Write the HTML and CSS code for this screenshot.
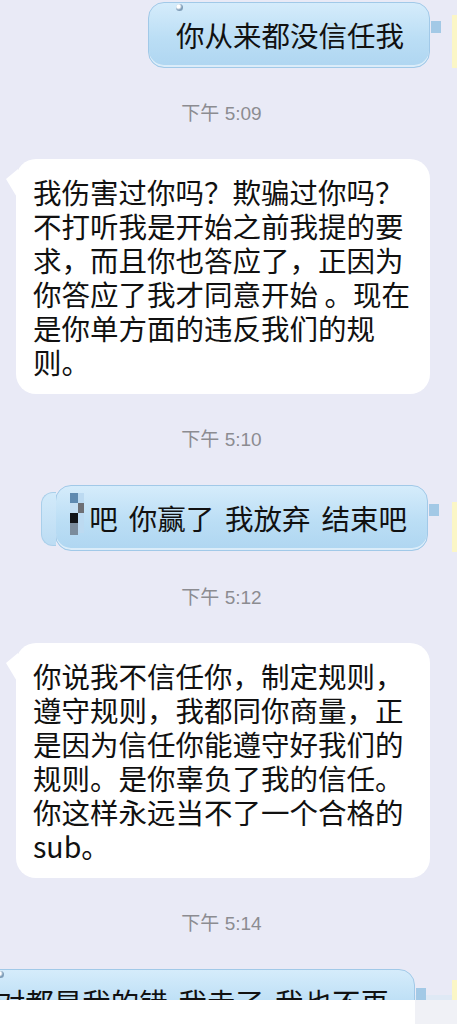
FILE: index.html
```html
<!DOCTYPE html>
<html lang="zh-CN">
<head>
    <meta charset="UTF-8">
    <meta name="viewport" content="width=device-width, initial-scale=1.0">
    <title>聊天</title>
    <link rel="stylesheet" href="styles.css">
</head>
<body>
    <div class="chat">
        <div class="row sent">
            <div class="bubble blue first"><i class="pearl"></i>你从来都没信任我</div>
            <span class="avatar"></span>
        </div>

        <div class="time">下午 5:09</div>

        <div class="row recv">
            <div class="bubble white">我伤害过你吗？欺骗过你吗？不打听我是开始之前我提的要求，而且你也答应了，正因为你答应了我才同意开始 。现在是你单方面的违反我们的规则。</div>
        </div>

        <div class="time">下午 5:10</div>

        <div class="row sent">
            <div class="bubble blue masked">
                <span class="mosaic">
                    <b class="m1"></b><b class="m2"></b>
                    <b class="m3"></b><b class="m4"></b>
                    <b class="m5"></b><b class="m2"></b>
                    <b class="m6"></b><b class="m2"></b>
                </span>吧 你赢了 我放弃 结束吧
            </div>
            <span class="avatar mid"></span>
        </div>

        <div class="time">下午 5:12</div>

        <div class="row recv">
            <div class="bubble white">你说我不信任你，制定规则，遵守规则，我都同你商量，正是因为信任你能遵守好我们的规则。是你辜负了我的信任。你这样永远当不了一个合格的sub。</div>
        </div>

        <div class="time">下午 5:14</div>

        <div class="row sent">
            <div class="bubble blue last"><i class="pearl"></i>对都是我的错 我走了 我也不再</div>
            <span class="avatar low"></span>
        </div>
    </div>
    <div class="footer"></div>
</body>
</html>
```

FILE: styles.css
```css
body {
    margin: 0;
    height: 1024px;
    overflow: hidden;
    background-color: #e9eaf6;
    font-family: "Noto Sans CJK SC", "Noto Sans", sans-serif;
    color: #111;
}
.chat {
    height: 1000px;
    overflow: hidden;
    padding-top: 2px;
    box-sizing: border-box;
    display: flex;
    flex-direction: column;
}
.row {
    display: flex;
    flex-shrink: 0;
}
.row.sent {
    justify-content: flex-end;
    align-items: flex-start;
}
.row.recv {
    padding-left: 16px;
}
.time {
    height: 24px;
    line-height: 24px;
    margin: 34px 0 33px;
    padding-right: 14px;
    text-align: center;
    font-family: "Liberation Sans", "Noto Sans CJK SC", sans-serif;
    font-size: 19px;
    color: #8c8c91;
    flex-shrink: 0;
}

/* bubbles */
.bubble {
    position: relative;
    font-size: 28.5px;
    line-height: 34px;
}
.bubble.white {
    width: 414px;
    box-sizing: border-box;
    padding: 16px 17px 15px;
    background: #fff;
    border-radius: 20px;
}
.bubble.white::before {
    content: "";
    position: absolute;
    left: -10px;
    top: 10px;
    width: 12px;
    height: 30px;
    background: #fff;
    clip-path: polygon(100% 0, 0 33%, 100% 100%);
}
.bubble.blue {
    flex-shrink: 0;
    white-space: nowrap;
    word-spacing: 4.5px;
    padding: 15px 25px 15px 27px;
    background: linear-gradient(#d5ecfb, #bbdef5 55%, #afd6f1);
    border: 1px solid #a1c9e8;
    border-radius: 16px;
    box-shadow: inset 0 -2px 0 rgba(255, 255, 255, 0.55);
}
.bubble.blue::after {
    content: "";
    position: absolute;
    right: -12px;
    top: 18px;
    width: 10px;
    height: 12px;
    background: #a3c9e6;
}
.bubble.first {
    margin-right: 22px;
}
.bubble.masked {
    margin-right: 24px;
    padding-left: 33px;
    padding-right: 20px;
}
.bubble.masked::before {
    content: "";
    position: absolute;
    left: -15px;
    top: 6px;
    bottom: 4px;
    width: 14px;
    background: linear-gradient(#d2eafa, #bcdcf3);
    border: 1px solid #a9cfea;
    border-right: none;
    border-radius: 12px 0 0 12px;
}
.bubble.last {
    margin-right: 37px;
}
.pearl {
    position: absolute;
    left: 27px;
    top: 1px;
    width: 7px;
    height: 7px;
    border-radius: 50%;
    background: radial-gradient(circle at 35% 35%, #fff 0 25%, #7f9db8 55%);
}

/* pixelated patch over the first word */
.mosaic {
    position: absolute;
    left: 14px;
    top: 7px;
    display: grid;
    grid-template-columns: 8px 6px;
    grid-auto-rows: 10px;
}
.mosaic b {
    display: block;
}
.m1 { background: #5f8ab0; }
.m2 { background: #bcdaf1; }
.m3 { background: #c4def2; }
.m4 { background: #6d6f74; }
.m5 { background: #121417; }
.m6 { background: #7b8c9c; height: 12px; }

/* edge of the avatar beside each sent message */
.avatar {
    flex-shrink: 0;
    width: 5px;
    height: 53px;
    margin-top: 13px;
    background: #fbf6c6;
}
.avatar.mid {
    margin-top: 17px;
    height: 50px;
}
.avatar.low {
    margin-top: 11px;
}

.footer {
    height: 24px;
    background: linear-gradient(to right, #fff 415px, #f0f1f6 415px);
    box-shadow: 0 -5px 0 #dfe9f5;
}
```
